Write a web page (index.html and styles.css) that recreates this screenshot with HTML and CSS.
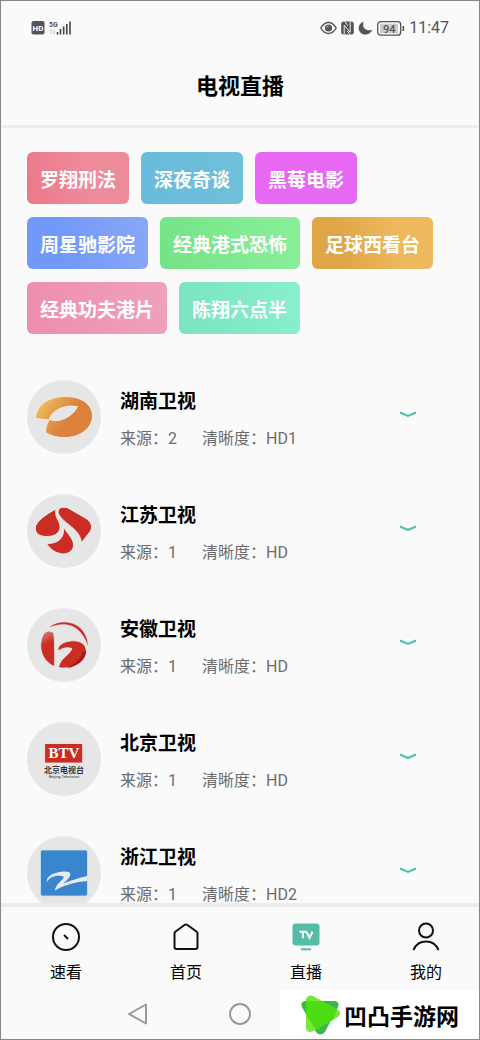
FILE: index.html
```html
<!DOCTYPE html>
<html lang="zh-CN">
<head>
<meta charset="utf-8">
<meta name="viewport" content="width=device-width, initial-scale=1">
<title>电视直播</title>
<link rel="stylesheet" href="styles.css">
</head>
<body>
<div class="app">
  <header class="header">
    <div class="status">
      <div class="status-group">
        <svg width="14" height="14" viewBox="0 0 14 14"><rect x="0.500" width="13" height="13.500" rx="2" fill="#555"/><text x="7" y="10" class="hd-text">HD</text></svg>
        <svg width="24" height="16" viewBox="0 0 24 16"><text x="0" y="7" class="net-text">5G</text><path d="M2 10v4M1 11l1-1M5 10v4M6 13l-1 1" stroke="#bbb" stroke-width=".8" fill="none"/><path d="M8.500 12v2.500M11.500 9v5.500M14.700 6.500v8M17.800 4v10.500M21 1.500v13" stroke="#444" stroke-width="1.600"/></svg>
      </div>
      <div class="status-group status-right">
        <svg width="17" height="14" viewBox="0 0 17 14" fill="none" stroke="#555"><path d="M.8 7Q4 1.500 8.500 1.500T16.200 7Q13 12.500 8.500 12.500T.8 7Z" stroke-width="1.400"/><circle cx="8.500" cy="7" r="3.600" fill="#555" stroke="none"/><path d="M7 6.500q.2-1.500 1.500-1.500" stroke="#ddd"/></svg>
        <svg width="13" height="14" viewBox="0 0 13 14"><rect x=".2" y=".5" width="12.600" height="13" rx="2.500" fill="#555"/><path d="M3.200 13.500V4.200l6 7V.5M3.800.5l3 4M9.200 13.500l-3-3.500" stroke="#eee" stroke-width="1" fill="none"/></svg>
        <svg width="15" height="14" viewBox="0 0 15 14"><path d="M5.500.5C-.5 3-1 10.500 4.500 13 8.500 14.700 13 12.500 14.300 8.700 8 11 3.500 6.500 5.500.5Z" fill="#555"/></svg>
        <svg width="28" height="15" viewBox="0 0 28 15"><rect x=".7" y=".7" width="23" height="13.500" rx="3" fill="#fafafa" stroke="#555" stroke-width="1.300"/><rect x="3" y="2.700" width="18" height="9.500" fill="#ccc"/><text x="12.200" y="11.500" class="battery-text">94</text><path d="M26.300 5v5" stroke="#555" stroke-width="1.600"/></svg>
        <time class="clock">11:47</time>
      </div>
    </div>
    <h1 class="page-title">电视直播</h1>
  </header>

  <main class="content">
    <div class="tags">
      <button class="tag tag-red">罗翔刑法</button>
      <button class="tag tag-sky">深夜奇谈</button>
      <button class="tag tag-violet">黑莓电影</button>
      <button class="tag tag-blue">周星驰影院</button>
      <button class="tag tag-green">经典港式恐怖</button>
      <button class="tag tag-orange">足球西看台</button>
      <button class="tag tag-pink">经典功夫港片</button>
      <button class="tag tag-mint">陈翔六点半</button>
    </div>

    <ul class="channels">
      <li class="channel">
        <svg class="logo" viewBox="0 0 74 74"><defs><linearGradient id="gold" x1="0" y1="0" x2="1" y2=".5"><stop offset=".2" stop-color="#ecb657"/><stop offset=".65" stop-color="#dc823d"/></linearGradient></defs><circle cx="37" cy="37" r="37" fill="#e6e6e6"/><path d="M8.500 38.500C9 25 22 16.500 38 16.500 54 16.500 65.500 24 65.500 36 65.500 48 53 57.500 38 57.500Q26 57.500 18.500 52.500Q18.500 46 22 40ZM22 39.500Q31 42.500 40 37.500 48.500 32 50.500 26.500 41 24.500 32.500 28.500 24 33 22 39.500Z" fill="url(#gold)" fill-rule="evenodd" stroke="#f0f2f4" stroke-width=".8"/></svg>
        <div class="info"><h2 class="name">湖南卫视</h2><p class="meta"><span>来源：2</span><span>清晰度：HD1</span></p></div>
        <button class="expand" aria-label="展开湖南卫视"><svg width="18" height="8" viewBox="0 0 18 8"><path d="M1 1.500l8 3.500 8-3.500"/></svg></button>
      </li>
      <li class="channel">
        <svg class="logo" viewBox="0 0 74 74"><circle cx="37" cy="37" r="37" fill="#e6e6e6"/><g fill="#c92d24" stroke="#f1f3f4" stroke-width=".8"><path d="M29 15Q12 24 8.500 32C7 41 15 42.500 20 42.500 30 42.500 33 37 33 33 33 26 27 24 29 15Z"/><path d="M32 14.500Q35 12.500 40 13.500L60 25Q67 31 63.500 37L54.500 48.500C53 34 37 31 31 19Z"/><path d="M36.500 32.500C40 40 46.500 44 46.500 51 46.500 58 39 61 33 59.500Q25 58 19.500 49.500C30 50 38 45 36.500 32.500Z"/></g></svg>
        <div class="info"><h2 class="name">江苏卫视</h2><p class="meta"><span>来源：1</span><span>清晰度：HD</span></p></div>
        <button class="expand" aria-label="展开江苏卫视"><svg width="18" height="8" viewBox="0 0 18 8"><path d="M1 1.500l8 3.500 8-3.500"/></svg></button>
      </li>
      <li class="channel">
        <svg class="logo" viewBox="0 0 74 74"><defs><linearGradient id="ruby" x1="0" y1="0" x2=".2" y2="1"><stop offset="0" stop-color="#de8a85"/><stop offset=".45" stop-color="#c92d24"/></linearGradient></defs><circle cx="37" cy="37" r="37" fill="#e6e6e6"/><g stroke="#f3f4f5" stroke-width=".7"><path d="M21 20C34 8 61 13 61.500 40C53 14 37 14 21 20Z" fill="#c92d24"/><path d="M17.500 24.500Q21 21.500 26.500 24.500Q28 30 27.500 58.500C12 52 11 34 17.500 24.500Z" fill="url(#ruby)"/><path d="M31 43C30 36 40 32 49 33 55 33.500 60 38 59.500 45 57 55 44 62 31.500 59.500C33 50 43 47 45 40.500Q38 38 31 43Z" fill="#c92d24"/></g><path d="M59 44C58 53 49 59 40 60Q54 53 56 43Z" fill="#a71c18"/></svg>
        <div class="info"><h2 class="name">安徽卫视</h2><p class="meta"><span>来源：1</span><span>清晰度：HD</span></p></div>
        <button class="expand" aria-label="展开安徽卫视"><svg width="18" height="8" viewBox="0 0 18 8"><path d="M1 1.500l8 3.500 8-3.500"/></svg></button>
      </li>
      <li class="channel">
        <svg class="logo" viewBox="0 0 74 74"><circle cx="37" cy="37" r="37" fill="#e6e6e6"/><rect x="17.700" y="21.500" width="38" height="19.500" fill="#c92d24" stroke="#f4eeee" stroke-width=".8"/><text x="37" y="36" class="btv">BTV</text><text x="37" y="50.500" class="btv-cn">北京电视台</text><text x="37" y="55.500" class="btv-en">Beijing Television</text></svg>
        <div class="info"><h2 class="name">北京卫视</h2><p class="meta"><span>来源：1</span><span>清晰度：HD</span></p></div>
        <button class="expand" aria-label="展开北京卫视"><svg width="18" height="8" viewBox="0 0 18 8"><path d="M1 1.500l8 3.500 8-3.500"/></svg></button>
      </li>
      <li class="channel">
        <svg class="logo" viewBox="0 0 74 74"><circle cx="37" cy="37" r="37" fill="#e6e6e6"/><rect x="13.500" y="14" width="47" height="46" rx="2" fill="#3985ce" stroke="#c9e6f0" stroke-width=".8"/><path d="M20 46.500C18 38 35 34 42 36 46 39 40 44 36.500 47.500Q47 43 60.500 40V45Q42 46 28 54.500C28 49 35 45 37 41 32 38 21 41 20 46.500Z" fill="#e8eaed"/></svg>
        <div class="info"><h2 class="name">浙江卫视</h2><p class="meta"><span>来源：1</span><span>清晰度：HD2</span></p></div>
        <button class="expand" aria-label="展开浙江卫视"><svg width="18" height="8" viewBox="0 0 18 8"><path d="M1 1.500l8 3.500 8-3.500"/></svg></button>
      </li>
    </ul>
  </main>

  <nav class="tabs">
    <a class="tab" href="#quick"><svg width="30" height="30" viewBox="0 0 30 30"><circle cx="15" cy="15" r="13"/><path d="M13 13l4 4"/></svg><span>速看</span></a>
    <a class="tab" href="#home"><svg width="30" height="30" viewBox="0 0 30 30"><path d="M3.500 11.500q0-1 .8-1.700L13.500 3q1.500-1 3 0l9.200 6.800q.8.700.8 1.700V25q0 2-2 2h-19q-2 0-2-2z"/></svg><span>首页</span></a>
    <a class="tab" href="#live" aria-current="page"><svg width="30" height="30" viewBox="0 0 30 30"><rect x="1.500" y="1.500" width="27" height="22" rx="3" fill="#55bda5" stroke="none"/><path d="M8.500 9.700h7M12 9.700v6.500M15.500 9.700l3 6 3-6" stroke="#fff" stroke-width="2"/><path d="M10 27.300h10" stroke="#55b8b8" stroke-width="2"/></svg><span>直播</span></a>
    <a class="tab" href="#mine"><svg width="30" height="30" viewBox="0 0 30 30"><circle cx="15" cy="8.500" r="7"/><path d="M2.500 28Q6 19.500 15 19.500T27.500 28"/></svg><span>我的</span></a>
  </nav>

  <div class="system">
    <button class="sys-button" aria-label="返回"><svg width="24" height="24" viewBox="0 0 24 24"><path d="M4 12L21 2.500v19z"/></svg></button>
    <button class="sys-button" aria-label="主屏幕"><svg width="24" height="24" viewBox="0 0 24 24"><circle cx="12" cy="12" r="10"/></svg></button>
  </div>

  <div class="brand">
    <svg width="40" height="42" viewBox="0 0 40 42"><path d="M4 7H34Q39 8 37 13L24 38Q19 43 15 38L1 13Q-1 8 4 7Z" fill="#3db54a"/><path d="M5 5Q7 0 12 2L37 16Q41 19 37 23L12 37Q6 40 5 34Z" fill="#75e935"/><path d="M5 7H21L36 15.500 32.500 25.500 14.500 35.500 5 20Z" fill="#4bdc13"/></svg>
    <span>凹凸手游网</span>
  </div>
</div>
</body>
</html>
```

FILE: styles.css
```css
* { box-sizing: border-box; }

body {
  margin: 0;
  background: #fafafa;
  color: #000;
  font-family: "Noto Sans CJK SC", "Noto Sans", sans-serif;
}

button { border: 0; padding: 0; font: inherit; cursor: pointer; }

.app {
  position: relative;
  display: flex;
  flex-direction: column;
  height: 100vh;
  border: 1px solid #888;
  overflow: hidden;
}

.header {
  padding: 17px 30px 24px;
  border-bottom: 3px solid #ececec;
}

.status,
.status-group { display: flex; align-items: center; }
.status { justify-content: space-between; height: 20px; }
.status-group { gap: 4px; }
.clock {
  font: 16px/20px Roboto, sans-serif;
  color: #555;
}

.hd-text { font: bold 8px Roboto, sans-serif; fill: #fff; text-anchor: middle; }
.net-text { font: bold 7px Roboto, sans-serif; fill: #555; }
.battery-text { font: 500 11px Roboto, sans-serif; fill: #555; text-anchor: middle; }

.page-title {
  margin: 29px 0 0;
  font-size: 22px;
  line-height: 34px;
  text-align: center;
}

.content {
  flex: 1;
  min-height: 0;
  padding: 24px 26px 0;
  overflow: hidden;
}

.tags { display: flex; flex-wrap: wrap; gap: 13px 12px; }
.tag {
  height: 52px;
  padding: 0 13px;
  border-radius: 6px;
  color: #fff;
  font-size: 19px;
  font-weight: bold;
}
.tag-red { background: linear-gradient(80deg, #ed7889, #ee8b9b 60%); }
.tag-sky { background: linear-gradient(80deg, #69bbdc, #70c0da); }
.tag-violet { background: #e768f2; }
.tag-blue { background: linear-gradient(80deg, #7299fa 30%, #89a7f4); }
.tag-green { background: linear-gradient(80deg, #74e386, #8aef9a); }
.tag-orange { background: linear-gradient(80deg, #dfa648 25%, #eeb85d 70%); }
.tag-pink { background: linear-gradient(80deg, #ee8dae, #f0a1bb); }
.tag-mint { background: linear-gradient(80deg, #7be3bf, #89efcd); }

.channels {
  display: flex;
  flex-direction: column;
  gap: 40px;
  margin: 46px 0 0;
  padding: 0;
  list-style: none;
}
.channel { display: flex; align-items: center; gap: 19px; }
.logo { flex: none; width: 74px; height: 74px; }
.info { flex: 1; padding-top: 2px; }
.name { margin: 0; font-size: 19px; line-height: 28px; }
.meta {
  display: grid;
  grid-template-columns: 82px 1fr;
  margin: 13px 0 0;
  color: #6c6c6c;
  font-family: Roboto, "Noto Sans CJK SC", sans-serif;
  font-size: 16px;
  line-height: 24px;
}
.expand {
  display: flex;
  justify-content: center;
  align-items: center;
  width: 44px;
  height: 44px;
  margin: 0 23px 4px 0;
  background: none;
}
.expand path { fill: none; stroke: #4bbfa8; stroke-width: 2; }

.btv { font: bold 15px "Liberation Serif", serif; fill: #fff; text-anchor: middle; }
.btv-cn { font: bold 8px "Noto Sans CJK SC", sans-serif; fill: #333; text-anchor: middle; }
.btv-en { font: 4px Roboto, sans-serif; fill: #333; text-anchor: middle; }

.tabs {
  display: flex;
  justify-content: space-between;
  padding: 15px 37px 6px 49px;
  border-top: 4px solid #ebebeb;
}
.tab {
  display: flex;
  flex-direction: column;
  align-items: center;
  gap: 7px;
  color: #000;
  font-size: 16px;
  line-height: 24px;
  text-decoration: none;
}
.tab svg { fill: none; stroke: #111; stroke-width: 2; }

.system {
  display: flex;
  gap: 79px;
  height: 50px;
  padding: 0 124px;
}
.sys-button { display: flex; align-items: center; background: none; }
.sys-button svg { fill: none; stroke: #999; stroke-width: 2; stroke-linejoin: round; }

/* Brand badge floats over the corner of the frame */
.brand {
  position: absolute;
  right: -1px;
  bottom: -1px;
  display: flex;
  align-items: center;
  gap: 3px;
  width: 200px;
  height: 50px;
  padding-left: 21px;
  background: #fff;
  font-size: 23px;
  font-weight: bold;
  white-space: nowrap;
}
```
